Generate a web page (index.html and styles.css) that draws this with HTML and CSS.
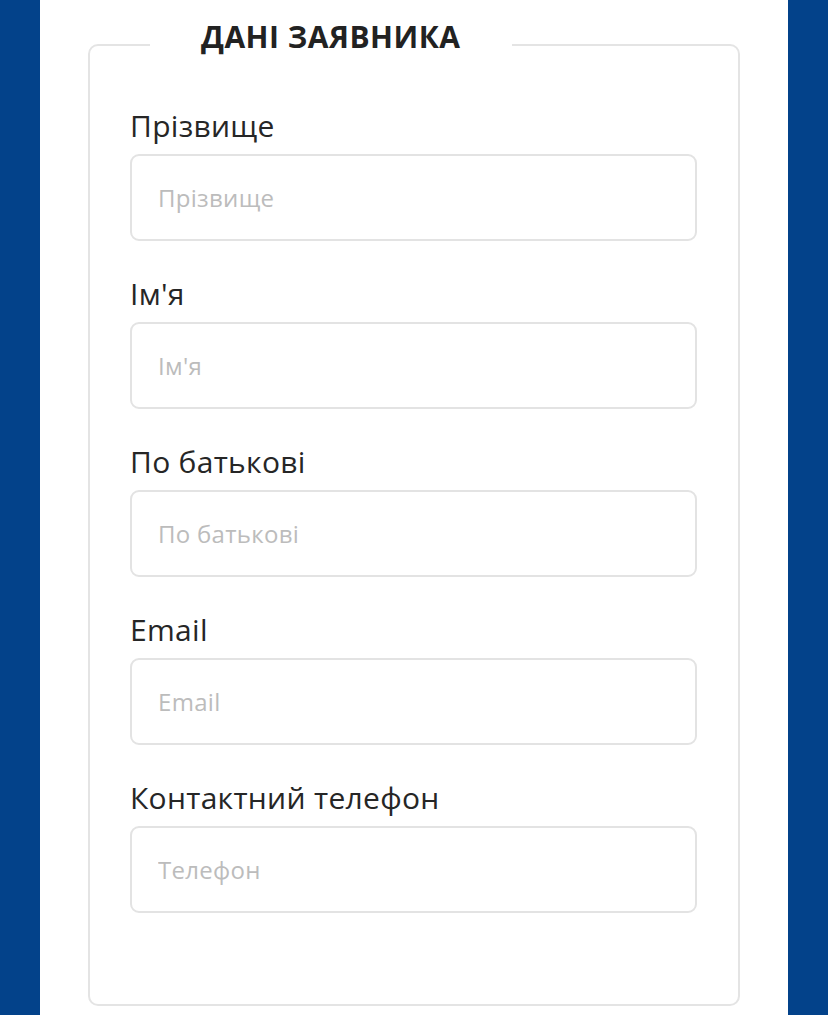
FILE: index.html
```html
<!DOCTYPE html>
<html lang="uk">

<head>
    <meta charset="UTF-8">
    <meta name="viewport" content="width=device-width, initial-scale=1.0">
    <title>Дані заявника</title>
    <link rel="stylesheet" href="styles.css">
</head>

<body>
    <div class="page">
        <div class="panel">
            <form class="applicant-form">
                <fieldset class="applicant">
                    <legend>ДАНІ ЗАЯВНИКА</legend>

                    <div class="field">
                        <label for="last-name">Прізвище</label>
                        <input type="text" id="last-name" placeholder="Прізвище">
                    </div>
                    <div class="field">
                        <label for="first-name">Ім'я</label>
                        <input type="text" id="first-name" placeholder="Ім'я">
                    </div>
                    <div class="field">
                        <label for="middle-name">По батькові</label>
                        <input type="text" id="middle-name" placeholder="По батькові">
                    </div>
                    <div class="field">
                        <label for="email">Email</label>
                        <input type="email" id="email" placeholder="Email">
                    </div>
                    <div class="field">
                        <label for="phone">Контактний телефон</label>
                        <input type="tel" id="phone" placeholder="Телефон">
                    </div>
                </fieldset>
            </form>
        </div>
    </div>
</body>

</html>
```

FILE: styles.css
```css
body {
    margin: 0;
    padding: 0;
    background: #03428a;
    font-family: "Open Sans", "Noto Sans", sans-serif;
    color: #262626;
}

.page {
    min-height: 100vh;
    padding: 0 40px;
    box-sizing: border-box;
}

.panel {
    background: white;
    min-height: 100vh;
    padding: 0 48px 10px;
    box-sizing: border-box;
}

.applicant-form {
    margin: 0;
}

.applicant {
    margin: 0;
    padding: 20px 41px 55px 40px;
    border: 2px solid #e4e4e4;
    border-radius: 10px;
}

.applicant legend {
    margin-left: 20px;
    padding: 18px 51px 33px;
    font-size: 30px;
    font-weight: bold;
    letter-spacing: 0.5px;
    color: #222;
    line-height: 38px;
}

.field {
    margin-bottom: 36px;
}

.field label {
    display: block;
    font-size: 30px;
    letter-spacing: 0.3px;
    line-height: 34px;
    margin-bottom: 11px;
}

.field input {
    display: block;
    width: 100%;
    height: 87px;
    box-sizing: border-box;
    padding: 0 26px;
    border: 2px solid #e3e3e3;
    border-radius: 9px;
    font-family: inherit;
    font-size: 24px;
    letter-spacing: 0.3px;
    color: #262626;
    background: white;
    outline: none;
}

.field input::placeholder {
    color: #bcbcbc;
}
```
